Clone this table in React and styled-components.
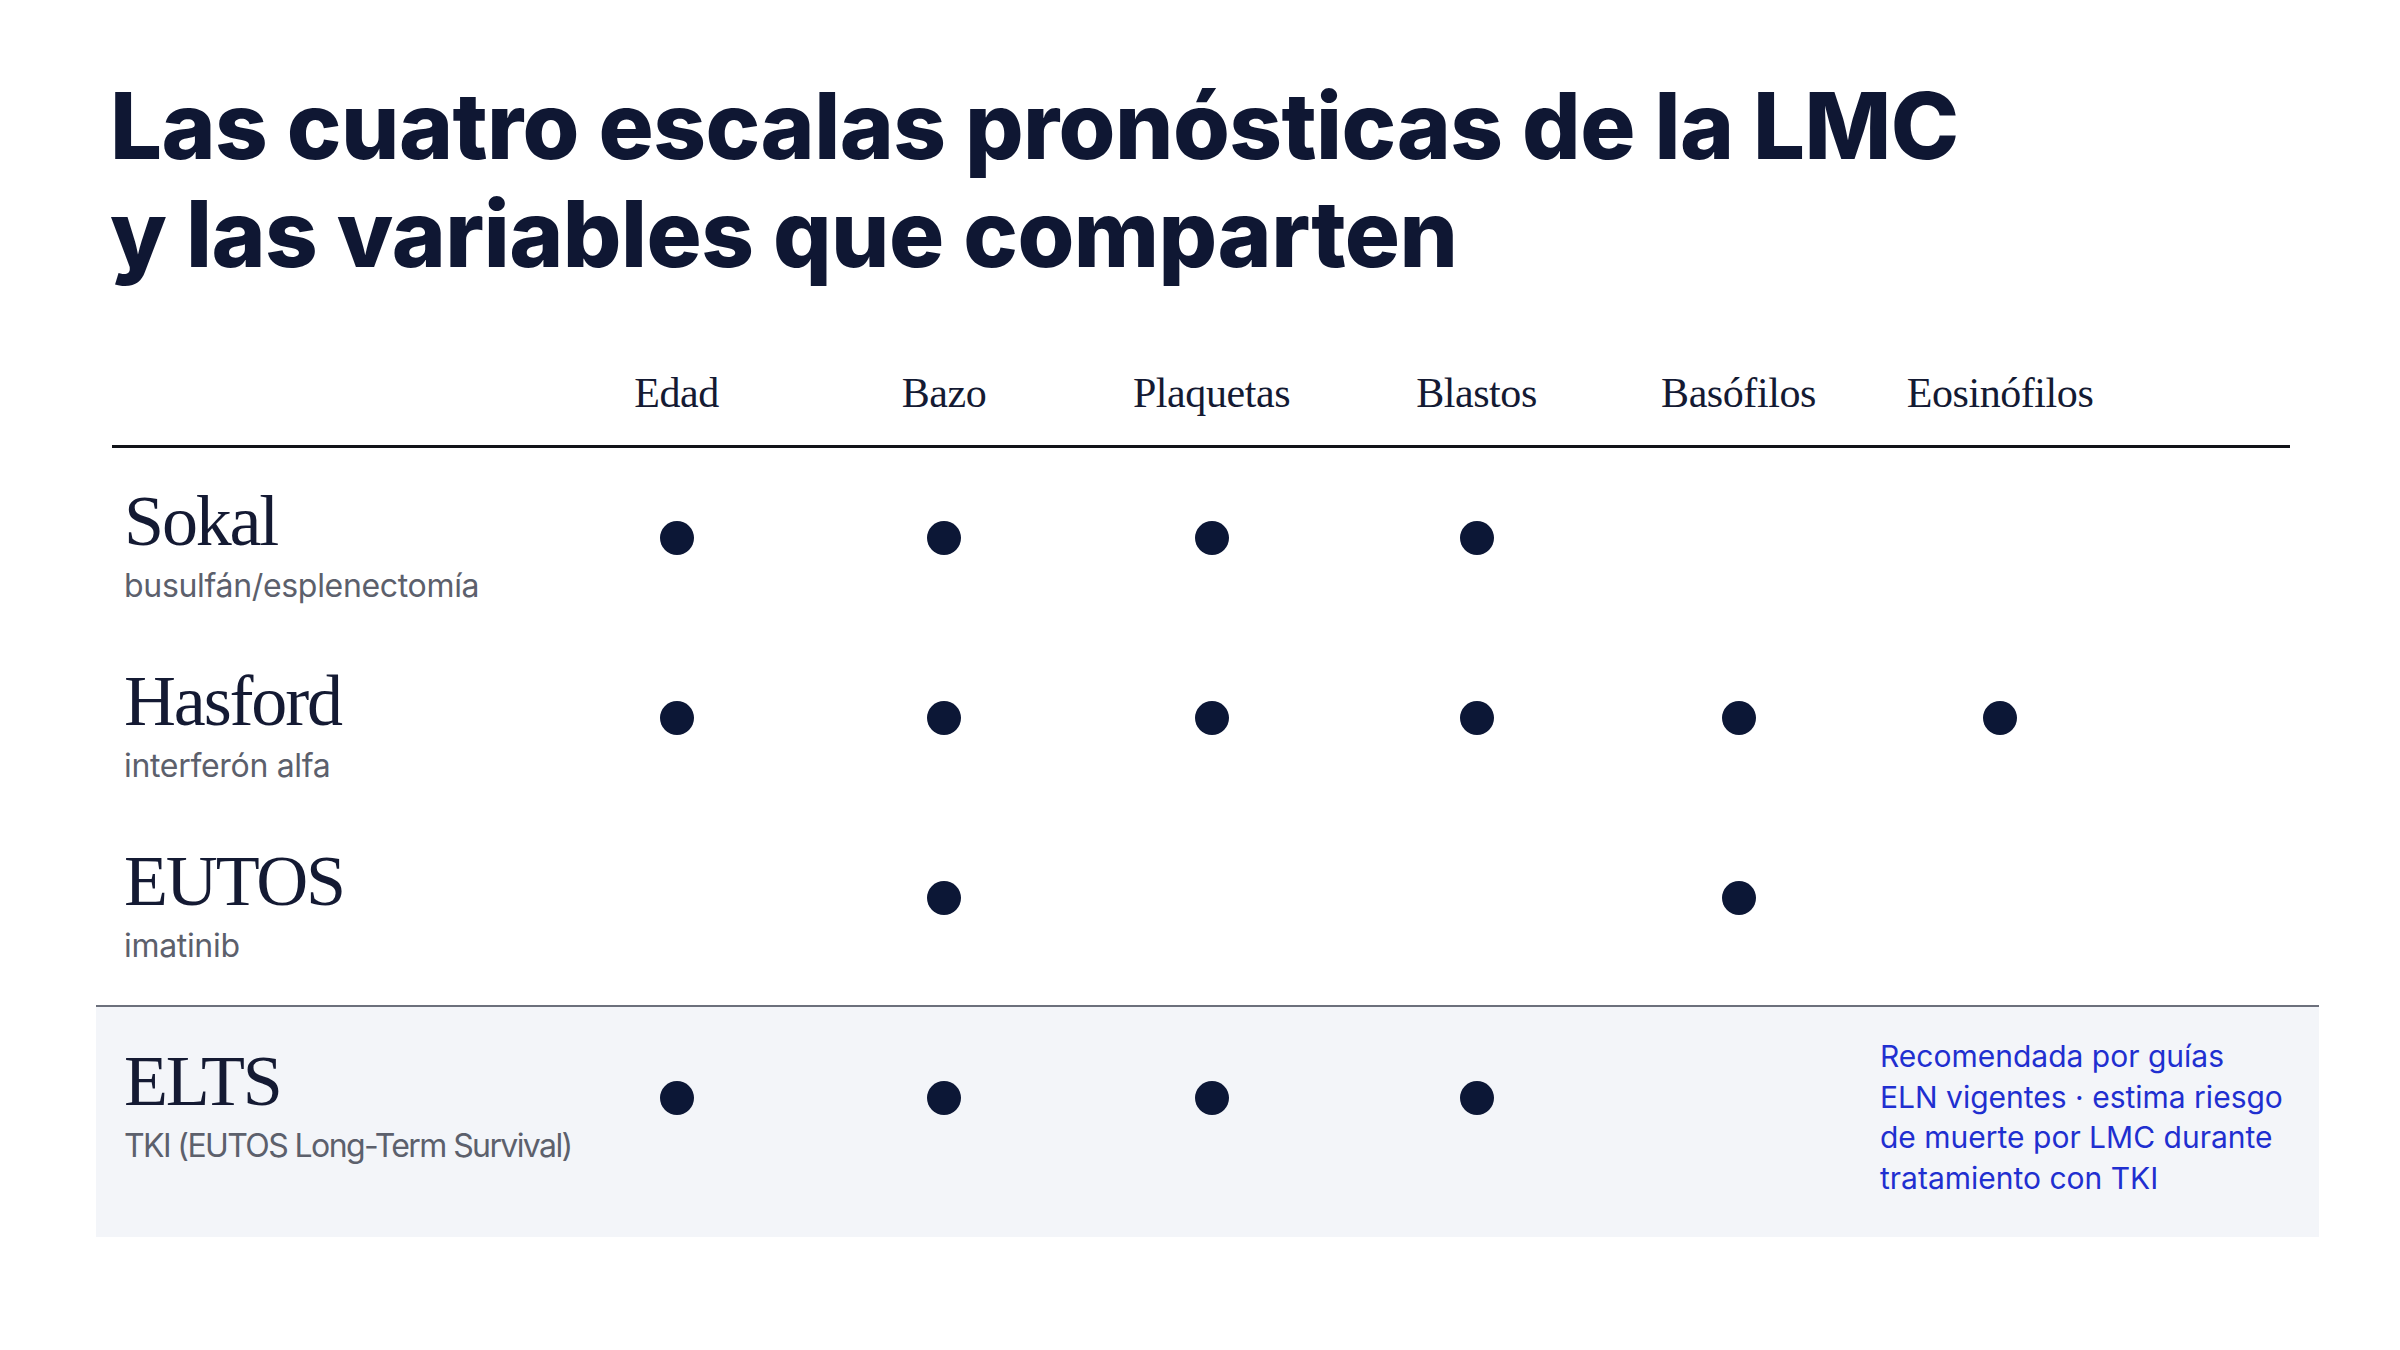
import React from "react";
import styled, { createGlobalStyle } from "styled-components";

const GlobalStyle = createGlobalStyle`
  html, body {
    margin: 0;
    padding: 0;
    background: #ffffff;
  }
  * {
    box-sizing: border-box;
  }
`;

const columns = ["Edad", "Bazo", "Plaquetas", "Blastos", "Basófilos", "Eosinófilos"];

const scales = [
  { name: "Sokal", sub: "busulfán/esplenectomía", marks: [1, 1, 1, 1, 0, 0] },
  { name: "Hasford", sub: "interferón alfa", marks: [1, 1, 1, 1, 1, 1] },
  { name: "EUTOS", sub: "imatinib", marks: [0, 1, 0, 0, 1, 0] },
];

// ELTS leaves the last column to the note
const elts = { name: "ELTS", sub: "TKI (EUTOS Long-Term Survival)", marks: [1, 1, 1, 1, 0] };

const Page = styled.div`
  width: 2400px;
  height: 1350px;
  padding: 72px 81px 0 96px;
  background: #ffffff;
  overflow: hidden;
`;

const Title = styled.h1`
  margin: 0 0 0 14px;
  font-family: Inter, "Liberation Sans", sans-serif;
  font-weight: 800;
  font-size: 92px;
  line-height: 108px;
  letter-spacing: -0.006em;
  color: #0f1733;
`;

const Table = styled.div`
  margin-top: 84px;
  display: flex;
  flex-direction: column;
`;

const Grid = styled.div`
  display: grid;
  grid-template-columns: 431px 267px 268px 267px 263px 261px 262px 1fr;
`;

const HeaderRow = styled(Grid)`
  margin: 0 29px 0 16px;
  padding-bottom: 31px;
  border-bottom: 3px solid #111318;
`;

const HeaderCell = styled.div`
  text-align: center;
  font-family: "Liberation Serif", "DejaVu Serif", serif;
  font-size: 42px;
  line-height: 1;
  letter-spacing: -0.01em;
  color: #141a33;
`;

const Row = styled(Grid)`
  margin: 0 29px 0 16px;
  padding: 37px 0 0;
  height: 180px;
  align-items: start;
`;

const HighlightRow = styled(Grid)`
  margin-top: 17px;
  padding: 29px 29px 39px 16px;
  background: #f3f5f9;
  border-top: 2px solid #6c707c;
  align-items: start;
`;

const Label = styled.div`
  padding-left: 12px;
  margin-top: ${(p) => (p.$shift ? "9px" : "0")};
  white-space: nowrap;
`;

const Name = styled.div`
  font-family: "Liberation Serif", "DejaVu Serif", serif;
  font-size: 72px;
  line-height: 1;
  letter-spacing: -0.03em;
  color: #141a33;
`;

const Sub = styled.div`
  margin-top: 11px;
  font-family: Inter, "Liberation Sans", sans-serif;
  font-size: 32px;
  line-height: 36px;
  letter-spacing: ${(p) => (p.$condensed ? "-0.05em" : "-0.01em")};
  color: #5c606c;
`;

const DotCell = styled.div`
  display: flex;
  justify-content: center;
  margin-top: ${(p) => (p.$shift ? "45px" : "36px")};
  height: 34px;
`;

const Dot = styled.span`
  width: 34px;
  height: 34px;
  border-radius: 50%;
  background: #0c1736;
`;

const Note = styled.div`
  grid-column: 7 / span 2;
  padding-left: 11px;
  white-space: nowrap;
  font-family: Inter, "Liberation Sans", sans-serif;
  font-size: 30px;
  line-height: 40.5px;
  color: #1f2fd0;
`;

function Marks({ marks, shift }) {
  return marks.map((m, i) => (
    <DotCell key={i} $shift={shift}>
      {m ? <Dot /> : null}
    </DotCell>
  ));
}

export default function App() {
  return (
    <>
      <GlobalStyle />
      <Page>
        <Title>
          Las cuatro escalas pronósticas de la LMC
          <br />y las variables que comparten
        </Title>
        <Table>
          <HeaderRow>
            <div />
            {columns.map((c) => (
              <HeaderCell key={c}>{c}</HeaderCell>
            ))}
          </HeaderRow>
          {scales.map((s) => (
            <Row key={s.name}>
              <Label>
                <Name>{s.name}</Name>
                <Sub>{s.sub}</Sub>
              </Label>
              <Marks marks={s.marks} />
            </Row>
          ))}
          <HighlightRow>
            <Label $shift>
              <Name>{elts.name}</Name>
              <Sub $condensed>{elts.sub}</Sub>
            </Label>
            <Marks marks={elts.marks} shift />
            <Note>
              Recomendada por guías
              <br />
              ELN vigentes · estima riesgo
              <br />
              de muerte por LMC durante
              <br />
              tratamiento con TKI
            </Note>
          </HighlightRow>
        </Table>
      </Page>
    </>
  );
}
